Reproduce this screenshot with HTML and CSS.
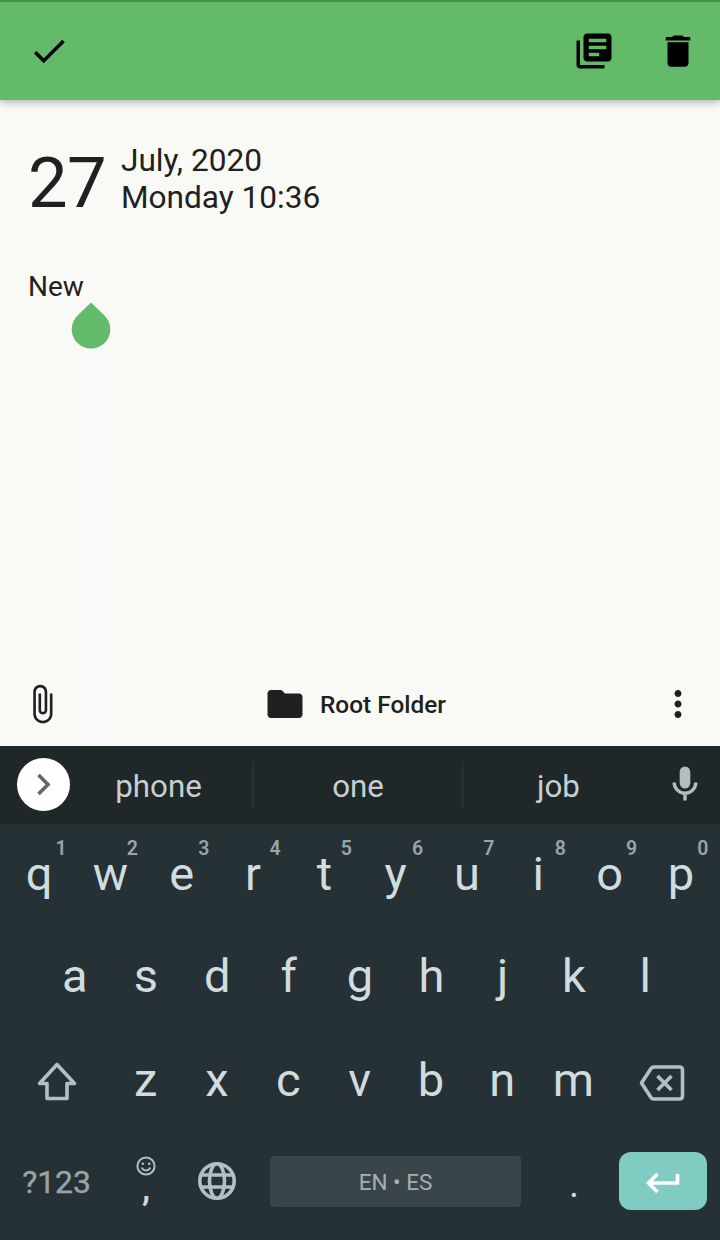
FILE: index.html
```html
<!DOCTYPE html>
<html lang="en">
<head>
<meta charset="utf-8">
<title>Note editor</title>
<link rel="stylesheet" href="styles.css">
</head>
<body>
<header class="appbar">
  <svg class="icon" viewBox="0 0 24 24"><path d="M9 16.17L4.83 12l-1.42 1.41L9 19 21 7l-1.41-1.41z"/></svg>
  <div class="actions">
    <svg class="icon" viewBox="0 0 24 24"><path d="M4 6H2v14c0 1.100.9 2 2 2h14v-2H4V6zm16-4H8c-1.100 0-2 .9-2 2v12c0 1.100.9 2 2 2h12c1.100 0 2-.9 2-2V4c0-1.100-.9-2-2-2zm-1 9H9V9h10v2zm-4 4H9v-2h6v2zm4-8H9V5h10v2z"/></svg>
    <svg class="icon" viewBox="0 0 24 24"><path d="M6 19c0 1.100.9 2 2 2h8c1.100 0 2-.9 2-2V7H6v12zM19 4h-3.500l-1.200-.9h-4.600L8.500 4H5v2h14V4z"/></svg>
  </div>
</header>
<main class="note">
  <div class="date">
    <span class="day">27</span>
    <div class="when"><span>July, 2020</span><span>Monday 10:36</span></div>
  </div>
  <div class="body">New<svg class="handle" viewBox="0 0 40 47"><path d="M20 0.500L33.200 13.200A19.300 19.300 0 1 1 6.800 13.200Z"/></svg></div>
</main>
<div class="toolbar">
  <svg class="icon" viewBox="0 0 24 24"><path d="M16.500 6v11.500c0 2.210-1.790 4-4 4s-4-1.790-4-4V5c0-1.380 1.120-2.500 2.500-2.500s2.500 1.120 2.500 2.500v10.500c0 .55-.45 1-1 1s-1-.45-1-1V6H10v9.500c0 1.380 1.120 2.500 2.500 2.500s2.500-1.120 2.500-2.500V5c0-2.210-1.790-4-4-4S7 2.790 7 5v12.500c0 3.040 2.460 5.500 5.500 5.500s5.500-2.460 5.500-5.500V6h-1.500z"/></svg>
  <div class="folder">
    <svg class="icon" viewBox="0 0 24 24"><path d="M10 4H4c-1.100 0-1.990.9-1.990 2L2 18c0 1.100.9 2 2 2h16c1.100 0 2-.9 2-2V8c0-1.100-.9-2-2-2h-8l-2-2z"/></svg>
    <span>Root Folder</span>
  </div>
  <svg class="icon" viewBox="0 0 24 24"><path d="M12 8c1.100 0 2-.9 2-2s-.9-2-2-2-2 .9-2 2 .9 2 2 2zm0 2c-1.100 0-2 .9-2 2s.9 2 2 2 2-.9 2-2-.9-2-2-2zm0 6c-1.100 0-2 .9-2 2s.9 2 2 2 2-.9 2-2-.9-2-2-2z"/></svg>
</div>
<section class="keyboard">
  <div class="suggestions">
    <span class="expand"><svg width="53" height="53" viewBox="0 0 53 53"><path d="M21.500 17L31 26.500L21.500 36"/></svg></span>
    <span class="word first">phone</span>
    <span class="word">one</span>
    <span class="word last">job</span>
    <svg class="mic" width="26" height="36" viewBox="0 0 26 36"><rect x="7.700" y="0.500" width="10.600" height="22" rx="5.300"/><path d="M2.200 16.500a10.800 10.800 0 0 0 21.600 0M13 27v7.500"/></svg>
  </div>
  <div class="row top">
    <span class="key">q<sup>1</sup></span><span class="key">w<sup>2</sup></span><span class="key">e<sup>3</sup></span><span class="key">r<sup>4</sup></span><span class="key">t<sup>5</sup></span><span class="key">y<sup>6</sup></span><span class="key">u<sup>7</sup></span><span class="key">i<sup>8</sup></span><span class="key">o<sup>9</sup></span><span class="key">p<sup>0</sup></span>
  </div>
  <div class="row home">
    <span class="key">a</span><span class="key">s</span><span class="key">d</span><span class="key">f</span><span class="key">g</span><span class="key">h</span><span class="key">j</span><span class="key">k</span><span class="key">l</span>
  </div>
  <div class="row lower">
    <span class="key"><svg class="line shift" width="42" height="40" viewBox="0 0 42 40"><path d="M21 2.500L38.500 21.500H31V36.500H11V21.500H3.500Z"/></svg></span>
    <span class="key">z</span><span class="key">x</span><span class="key">c</span><span class="key">v</span><span class="key">b</span><span class="key">n</span><span class="key">m</span>
    <span class="key"><svg class="line erase" width="46" height="38" viewBox="0 0 46 38"><path d="M15 3H40.500Q43.500 3 43.500 6V32Q43.500 35 40.500 35H15Q13 35 12 33.500L2.500 19L12 4.500Q13 3 15 3ZM18.500 12L32.500 26M32.500 12L18.500 26"/></svg></span>
  </div>
  <div class="row bottom">
    <span class="symbols">?123</span>
    <span class="comma"><svg width="20" height="20" viewBox="0 0 20 20"><circle cx="10" cy="10" r="8.600"/><path d="M5.800 11.500a4.500 4.500 0 0 0 8.400 0"/><circle class="eye" cx="6.800" cy="7.800" r="1.300"/><circle class="eye" cx="13.200" cy="7.800" r="1.300"/></svg><b>,</b></span>
    <span class="globe"><svg class="line" width="40" height="40" viewBox="0 0 40 40"><circle cx="20" cy="20" r="17.200"/><ellipse cx="20" cy="20" rx="7.500" ry="17.200"/><path d="M4 14H36M4 26H36"/></svg></span>
    <span class="space">EN • ES</span>
    <span class="period">.</span>
    <span class="enter"><svg width="36" height="24" viewBox="0 0 36 24"><path d="M32.500 3V12H3.500M12.500 3L3.500 12L12.500 21"/></svg></span>
  </div>
</section>
</body>
</html>
```
FILE: styles.css
```css
* { box-sizing: border-box; }
body {
  margin: 0;
  width: 720px;
  height: 1240px;
  overflow: hidden;
  display: flex;
  flex-direction: column;
  font-family: Roboto, "Liberation Sans", sans-serif;
  color: #1f2120;
  background: linear-gradient(#f9f9fa, #f9f9fa) 80px 350px / 32px 396px no-repeat, #f9faf6;
}
svg { display: block; flex: none; }
.icon { width: 42px; height: 42px; fill: currentColor; }

.appbar {
  height: 100px;
  padding: 0 21px 0 28px;
  display: flex;
  align-items: center;
  justify-content: space-between;
  color: #000;
  background: #63ba68;
  border-top: 2px solid #43914a;
  box-shadow: 0 2px 8px rgba(0, 0, 0, .3);
}
.actions { display: flex; gap: 42px; }

.note { flex: 1; padding: 43px 28px 0; }
.date { display: flex; height: 78px; }
.day { width: 93px; font-size: 70.500px; line-height: 80px; letter-spacing: -.5px; }
.when { display: flex; flex-direction: column; font-size: 31.600px; line-height: 36.500px; }
.body { position: relative; width: fit-content; margin-top: 49px; font-size: 28px; line-height: 34px; }
.handle { position: absolute; left: 42.500px; top: 32px; width: 40px; height: 47px; fill: #63ba68; }

.toolbar {
  height: 84px;
  padding: 0 21px;
  display: grid;
  grid-template-columns: 243px 1fr 42px;
  align-items: center;
}
.folder { display: flex; align-items: center; gap: 14px; font-size: 24.400px; font-weight: 500; }

.keyboard { height: 494px; background: #263136; color: #d0dcdd; }
.suggestions {
  height: 78px;
  display: grid;
  grid-template-columns: 70px 184px 210px 189px 64px;
  align-items: center;
  background: #202729;
}
.expand { margin: -2px 0 0 17px; width: 53px; height: 53px; border-radius: 50%; background: #fff; }
.expand path { fill: none; stroke: #666; stroke-width: 3.600; }
.word {
  height: 46px;
  line-height: 49px;
  text-align: center;
  font-size: 31.300px;
  color: #c6d0d1;
  border-right: 2px solid #283032;
}
.word.first { padding-right: 5px; }
.word.last { border-right: 0; }
.mic { justify-self: center; margin-top: -2px; fill: #b3bdc0; }
.mic path { fill: none; stroke: #b3bdc0; stroke-width: 3.400; }

.row { display: grid; align-items: center; }
.key {
  position: relative;
  display: flex;
  justify-content: center;
  font-size: 47px;
  line-height: 56px;
}
.top { height: 99px; padding: 0 3.500px; grid-template-columns: repeat(10, 1fr); }
.home { height: 106px; padding: 0 39px; grid-template-columns: repeat(9, 1fr); }
.lower { height: 101px; padding: 0 3.500px; grid-template-columns: 106.500px repeat(7, 71.300px) 1fr; }
sup {
  position: absolute;
  left: calc(50% + 12px);
  width: 20px;
  top: -9px;
  text-align: center;
  font-size: 19.500px;
  font-weight: 600;
  line-height: 24px;
  color: #98a4a6;
}
.line { fill: none; stroke: #b3bfc2; stroke-width: 3.600; stroke-linejoin: round; }
.shift { margin-top: 4px; }
.erase { margin: 6px 2px 0 0; }

.bottom { height: 102px; grid-template-columns: 113px 66px 76px 281px 76px 101px; justify-items: center; }
.symbols { margin-top: 2px; font-size: 31.800px; font-weight: 400; -webkit-text-stroke: .4px; color: #98a4a6; line-height: 40px; }
.comma { display: flex; flex-direction: column; align-items: center; margin-top: -6px; }
.comma svg { fill: none; stroke: #b3bfc2; stroke-width: 2; }
.comma .eye { fill: #b3bfc2; stroke: none; }
.comma b { font-size: 36px; font-weight: 500; line-height: 24px; }
.space {
  width: 251px;
  height: 51px;
  border-radius: 4px;
  background: #3a454a;
  color: #a3afb1;
  text-align: center;
  font-size: 22.500px;
  line-height: 52px;
}
.period { font-size: 38px; line-height: 48px; margin-top: 6px; }
.enter {
  width: 88px;
  height: 58px;
  border-radius: 12px;
  display: flex;
  align-items: center;
  justify-content: center;
  background: #80cbc2;
}
.enter svg { margin-top: 3px; }
.enter path { fill: none; stroke: #fff; stroke-width: 3.600; }
```
